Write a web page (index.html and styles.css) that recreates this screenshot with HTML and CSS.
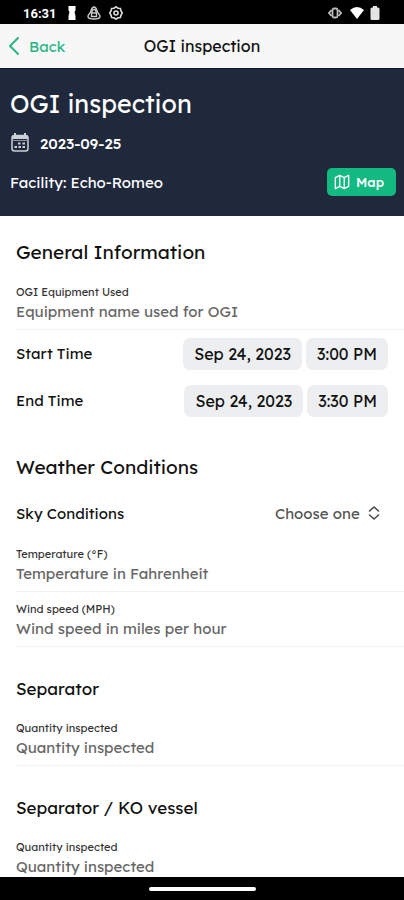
FILE: index.html
```html
<!DOCTYPE html>
<html lang="en">
<head>
  <meta charset="UTF-8">
  <meta name="viewport" content="width=device-width, initial-scale=1">
  <title>OGI inspection</title>
  <link rel="stylesheet" href="styles.css">
</head>
<body>
  <div class="status-bar">
    <span class="clock">16:31</span>
    <svg class="status-icon" viewBox="0 0 14 14" fill="#fff"><path d="M3.500 0h7v4.500L9.500 6l1 4v4h-7v-4l1-4-1-1.500z"/></svg>
    <svg class="status-icon" viewBox="0 0 14 14" fill="none" stroke="#ccc" stroke-width="1.400"><path d="M7 1C4.500 1 4.500 4 3.500 6S1 8.500 1 10.500 3 13 7 13s6-.5 6-2.500-1.500-2.500-2.500-4.500S9.500 1 7 1z"/><path d="M5 7V5.500a2 2 0 0 1 4 0V7"/><rect x="4.500" y="7" width="5" height="3.500"/></svg>
    <svg class="status-icon" viewBox="0 0 14 14" fill="none" stroke="#ddd" stroke-width="1.600"><path d="M7 .8l2 1.400 2.400.2.500 2.300L13.200 7l-1.300 2.300-.5 2.300-2.400.2-2 1.400-2-1.400-2.400-.2-.5-2.300L.8 7l1.300-2.300.5-2.300L5 2.200z"/><circle cx="7" cy="7" r="2"/></svg>
    <span class="spacer"></span>
    <svg class="status-icon" viewBox="0 0 14 14" fill="none" stroke="#bbb" stroke-width="1.800"><path d="M3.500 4L1 7l2.500 3M10.500 4L13 7l-2.500 3"/><rect x="4.500" y="2.500" width="5" height="9" rx="1.500"/></svg>
    <svg class="status-icon wifi" viewBox="0 0 14 14" fill="#fff"><path d="M7 13L0 4q7-6 14 0z"/></svg>
    <svg class="status-icon battery" viewBox="0 0 10 14" fill="#e4e4e4"><path d="M3 0h4v1.500h1q1.500 0 1.500 1.500v9.500Q9.500 14 8 14H2Q.5 14 .5 12.500V3Q.5 1.500 2 1.500h1z"/></svg>
  </div>

  <header class="nav-bar">
    <a href="#" class="back">
      <svg viewBox="0 0 12 20" fill="none" stroke="currentColor" stroke-width="2" stroke-linecap="round" stroke-linejoin="round"><path d="M10 2L2 10l8 8"/></svg>
      Back
    </a>
    <span class="nav-title">OGI inspection</span>
  </header>

  <div class="hero">
    <h1>OGI inspection</h1>
    <div class="date">
      <svg viewBox="0 0 20 20"><path d="M5 0v3M15 0v3" stroke="#cbd0d8" stroke-width="2"/><rect x="2" y="2.500" width="16" height="15.500" rx="2.500" fill="none" stroke="#cbd0d8" stroke-width="1.500"/><path d="M2 3h16v3H2z" fill="#cbd0d8"/><path d="M3 7.500h14" stroke="#8d95a3"/><path d="M8 10.500h2.500M12.500 10.500H15M4.500 14H7M8.500 14H11M12.500 14H15" stroke="#cbd0d8" stroke-width="2"/></svg>
      2023-09-25
    </div>
    <div class="facility">
      <span>Facility: Echo-Romeo</span>
      <button type="button" class="map-button">
        <svg viewBox="0 0 18 18" fill="none" stroke="currentColor" stroke-width="1.500" stroke-linejoin="round"><path d="M1.500 4L6.500 1.500l5 2.500 5-2.500V14l-5 2.500-5-2.500-5 2.500zM6.500 1.500V14M11.500 4v12.500"/></svg>
        Map
      </button>
    </div>
  </div>

  <main>
    <section>
      <h2>General Information</h2>
      <div class="field">
        <label for="equipment">OGI Equipment Used</label>
        <input type="text" id="equipment" placeholder="Equipment name used for OGI">
      </div>
      <div class="row">
        <span>Start Time</span>
        <div class="pills">
          <button type="button" class="pill">Sep 24, 2023</button>
          <button type="button" class="pill">3:00 PM</button>
        </div>
      </div>
      <div class="row">
        <span>End Time</span>
        <div class="pills">
          <button type="button" class="pill">Sep 24, 2023</button>
          <button type="button" class="pill">3:30 PM</button>
        </div>
      </div>
    </section>

    <section>
      <h2>Weather Conditions</h2>
      <div class="row">
        <label for="sky">Sky Conditions</label>
        <div class="select">
          <select id="sky">
            <option>Choose one</option>
            <option>Clear</option>
            <option>Cloudy</option>
          </select>
          <svg viewBox="0 0 12 14" fill="none" stroke="#444" stroke-width="1.500" stroke-linecap="round" stroke-linejoin="round"><path d="M1.500 5L6 1l4.500 4M1.500 9L6 13l4.500-4"/></svg>
        </div>
      </div>
      <div class="field">
        <label for="temperature">Temperature (°F)</label>
        <input type="text" id="temperature" placeholder="Temperature in Fahrenheit">
      </div>
      <div class="field">
        <label for="wind">Wind speed (MPH)</label>
        <input type="text" id="wind" placeholder="Wind speed in miles per hour">
      </div>
    </section>

    <section>
      <h3>Separator</h3>
      <div class="field">
        <label for="separator">Quantity inspected</label>
        <input type="text" id="separator" placeholder="Quantity inspected">
      </div>
    </section>

    <section>
      <h3>Separator / KO vessel</h3>
      <div class="field">
        <label for="vessel">Quantity inspected</label>
        <input type="text" id="vessel" placeholder="Quantity inspected">
      </div>
    </section>
  </main>

  <div class="home-bar"><span></span></div>
</body>
</html>
```
FILE: styles.css
```css
* {
  box-sizing: border-box;
}

body {
  margin: 0;
  height: 100vh;
  display: flex;
  flex-direction: column;
  overflow: hidden;
  background-color: #fff;
  color: #111;
  font-family: Lexend, Inter, sans-serif;
  font-size: 15px;
}

button, input, select {
  font: inherit;
  color: inherit;
}

.status-bar {
  flex: none;
  height: 24px;
  padding: 2px 24px 0 23px;
  display: flex;
  align-items: center;
  gap: 8px;
  background-color: #000;
  color: #fff;
}

.clock {
  font-family: Roboto, sans-serif;
  font-size: 13px;
  font-weight: 700;
}

.status-icon {
  width: 14px;
  height: 14px;
}

.battery {
  width: 10px;
}

.wifi {
  margin-right: -2px;
}

.spacer {
  flex: 1;
}

.nav-bar {
  flex: none;
  height: 44px;
  padding: 0 8px;
  display: grid;
  grid-template-columns: 1fr auto 1fr;
  align-items: center;
  background-color: #f7f7f7;
}

.nav-title {
  font-size: 16px;
}

.back {
  display: flex;
  align-items: center;
  gap: 9px;
  color: #2bb586;
  text-decoration: none;
}

.back svg {
  width: 12px;
  height: 20px;
}

.hero {
  flex: none;
  height: 148px;
  padding: 19px 8px 0 10px;
  background-color: #1f293b;
  border-top: 1px solid #0b1530;
  color: #fff;
}

.hero h1 {
  margin: 0 0 13px;
  font-size: 25px;
  line-height: 32px;
  font-weight: 400;
}

.date, .facility {
  display: flex;
  align-items: center;
}

.date {
  gap: 10px;
  height: 20px;
  margin-bottom: 15px;
  font-weight: 500;
}

.date svg {
  width: 20px;
  height: 20px;
}

.facility {
  justify-content: space-between;
}

.map-button {
  display: flex;
  align-items: center;
  gap: 6px;
  height: 28px;
  padding: 0 12px 0 7px;
  border: none;
  border-radius: 5px;
  background-color: #12b981;
  color: #fff;
  font-size: 13px;
  font-weight: 500;
}

.map-button svg {
  width: 16px;
  height: 18px;
}

main {
  flex: 1;
  min-height: 0;
  padding: 24px 0 0 16px;
  overflow: hidden;
}

section {
  margin-bottom: 31px;
}

h2, h3 {
  margin: 0 0 11px;
  font-weight: 400;
}

h2 {
  font-size: 19px;
  line-height: 24px;
}

h3 {
  font-size: 17px;
  line-height: 22px;
}

.field {
  display: flex;
  flex-direction: column;
  gap: 2px;
  padding: 11px 0 7px;
  border-bottom: 1px solid #f2f2f2;
}

.field label {
  font-size: 11px;
  line-height: 12px;
  color: #333;
}

.field input {
  width: 100%;
  height: 22px;
  padding: 0;
  border: none;
  outline: none;
  background: none;
}

.field input::placeholder {
  color: #666;
  opacity: 1;
}

.row {
  display: flex;
  align-items: center;
  justify-content: space-between;
  height: 47px;
  padding-right: 16px;
}

.pills {
  display: flex;
  gap: 4px;
}

.pill {
  height: 32px;
  padding: 0 11px;
  border: none;
  border-radius: 7px;
  background-color: #eceef0;
  font-size: 16px;
}

.select {
  position: relative;
  color: #555;
}

.select select {
  appearance: none;
  padding: 0 28px 0 0;
  border: none;
  outline: none;
  background: none;
}

.select svg {
  position: absolute;
  top: 2px;
  right: 8px;
  width: 12px;
  height: 14px;
  pointer-events: none;
}

.home-bar {
  flex: none;
  height: 23px;
  display: flex;
  align-items: center;
  justify-content: center;
  background-color: #000;
}

.home-bar span {
  width: 107px;
  height: 4px;
  border-radius: 2px;
  background-color: #fff;
}
```
